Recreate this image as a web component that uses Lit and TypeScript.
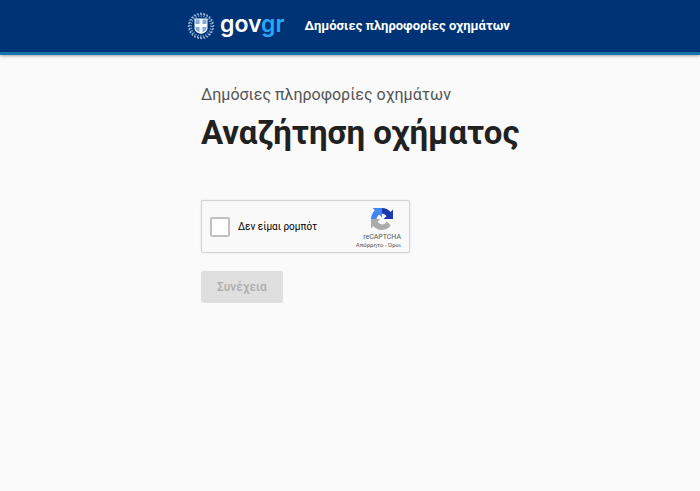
import { LitElement, html, css, svg } from "lit";
import { customElement } from "lit/decorators.js";

const LEAVES = Array.from({ length: 24 }, (_, i) => i * 15);

@customElement("gov-emblem")
class GovEmblem extends LitElement {
  static styles = css`
    :host { display: block; width: 28px; height: 28px; }
    svg { display: block; }
    .leaf { fill: #9fb9dc; }
    .inner { fill: #7d9dcb; }
    .shield { fill: #f4f9ff; }
    .field { fill: #86a9d8; }
  `;
  render() {
    return html`<svg width="28" height="28" viewBox="0 0 28 28" aria-hidden="true">
      ${LEAVES.map(
        (a) => svg`<g transform=${`rotate(${a} 14 14)`}>
          <path class="leaf" d="M13 .6Q15.800 1 15 3.400Q12.600 3 13 .6Z" />
          <path class="inner" d="M14.800 2.900Q15.600 4.400 13.800 5.200Q12.800 3.600 14.800 2.900Z" />
        </g>`
      )}
      <path class="shield" d="M7.500 6.500h13v10q0 3.500-6.500 5.500q-6.500-2-6.500-5.500z" />
      <path class="field" d="M8.500 7.500h4v4.500h-4zM15.500 7.500h4v4.500h-4zM8.500 15h4v5.200Q8.500 18.500 8.500 16.500zM15.500 15h4v1.500q0 2-4 3.700z" />
    </svg>`;
  }
}

@customElement("captcha-box")
class CaptchaBox extends LitElement {
  static styles = css`
    :host {
      display: flex; justify-content: space-between; box-sizing: border-box;
      width: 209px; max-width: 100%; min-height: 53px;
      background: #f9f9f9; border: 1px solid #d3d3d3; border-radius: 2px;
      box-shadow: 0 0 3px rgba(0, 0, 0, 0.08);
      color: #000; font-family: Roboto, sans-serif;
    }
    .check { display: flex; align-items: center; gap: 8px; padding-left: 8px; font-size: 10px; line-height: 14px; }
    .box {
      appearance: none; box-sizing: border-box; width: 20px; height: 20px; margin: 0;
      background: #fff; border: 2px solid #c1c1c1; border-radius: 2px;
    }
    .brand { display: flex; flex-direction: column; align-items: flex-end; padding: 7px 8px 0 0; color: #555; }
    .mark { margin-right: 8px; }
    .name { margin-top: 3px; font-size: 7px; line-height: 8px; }
    .links { font-size: 6px; line-height: 7px; white-space: nowrap; }
    a { color: inherit; text-decoration: none; }
    .dark { fill: #1c3aa9; }
    .light { fill: #4285f4; }
    .gray { fill: #ababab; }
  `;
  render() {
    return html`
      <label class="check"><input class="box" type="checkbox" />Δεν είμαι ρομπότ</label>
      <div class="brand">
        <svg class="mark" width="22" height="22" viewBox="0 0 64 64" aria-hidden="true">
          <path class="dark" d="M64 31.955l-.033-1.37V4.687l-7.16 7.16C50.948 4.674 42.033.093 32.05.093c-10.4 0-19.622 4.96-25.458 12.64l11.736 11.86a15.55 15.55 0 0 1 4.754-5.334c2.05-1.6 4.952-2.906 8.968-2.906.485 0 .86.057 1.135.163 4.976.393 9.288 3.14 11.828 7.124l-8.307 8.307L64 31.953" />
          <path class="light" d="M31.862.094l-1.37.033H4.594l7.16 7.16C4.58 13.147 0 22.06 0 32.046c0 10.4 4.96 19.622 12.64 25.458L24.5 45.768a15.55 15.55 0 0 1-5.334-4.754c-1.6-2.05-2.906-4.952-2.906-8.968 0-.485.057-.86.163-1.135.393-4.976 3.14-9.288 7.124-11.828l8.307 8.307L31.86.095" />
          <path class="gray" d="M.001 32.045l.033 1.37v25.898l7.16-7.16c5.86 7.173 14.774 11.754 24.76 11.754 10.4 0 19.622-4.96 25.458-12.64l-11.736-11.86a15.55 15.55 0 0 1-4.754 5.334c-2.05 1.6-4.952 2.906-8.968 2.906-.485 0-.86-.057-1.135-.163-4.976-.393-9.288-3.14-11.828-7.124l8.307-8.307c-10.522.04-22.4.066-27.295-.005" />
        </svg>
        <span class="name">reCAPTCHA</span>
        <span class="links"><a href="#privacy">Απόρρητο</a> - <a href="#terms">Όροι</a></span>
      </div>
    `;
  }
}

@customElement("app-root")
class AppRoot extends LitElement {
  static styles = css`
    :host { display: block; min-height: 100vh; background: #fafafa; color: #212121; font-family: Roboto, sans-serif; }
    .bar {
      display: flex; align-items: center; box-sizing: border-box; min-height: 55px;
      padding: 0 16px 0 187px; background: #003375; border-bottom: 3px solid #1573ae;
      box-shadow: 0 1px 3px rgba(0, 0, 0, 0.35);
    }
    .logo { display: flex; align-items: center; gap: 5px; color: #fff; text-decoration: none; }
    .word { padding-bottom: 4px; font: 600 23px/28px Inter, sans-serif; }
    .tint { color: #28a5f5; }
    .service { margin-left: 20px; color: #fff; font-size: 13px; font-weight: 700; line-height: 20px; text-decoration: none; }
    main { display: flex; flex-direction: column; align-items: flex-start; padding: 28px 16px 24px 201px; }
    .caption { margin: 0; color: #555; font-size: 16px; line-height: 24px; }
    h1 { margin: 5px 0 0; font-size: 33px; font-weight: 700; line-height: 42px; }
    captcha-box { margin-top: 46px; }
    .next {
      margin-top: 18px; padding: 6px 16px; border: 0; border-radius: 2px;
      background: #dfdfdf; color: #adadad; font: 500 12px/20px Roboto, sans-serif;
    }
  `;
  render() {
    return html`
      <header class="bar">
        <a class="logo" href="#home">
          <gov-emblem></gov-emblem>
          <span class="word">gov<span class="tint">gr</span></span>
        </a>
        <a class="service" href="#service">Δημόσιες πληροφορίες οχημάτων</a>
      </header>
      <main>
        <p class="caption">Δημόσιες πληροφορίες οχημάτων</p>
        <h1>Αναζήτηση οχήματος</h1>
        <captcha-box></captcha-box>
        <button class="next" type="button" disabled>Συνέχεια</button>
      </main>
    `;
  }
}
